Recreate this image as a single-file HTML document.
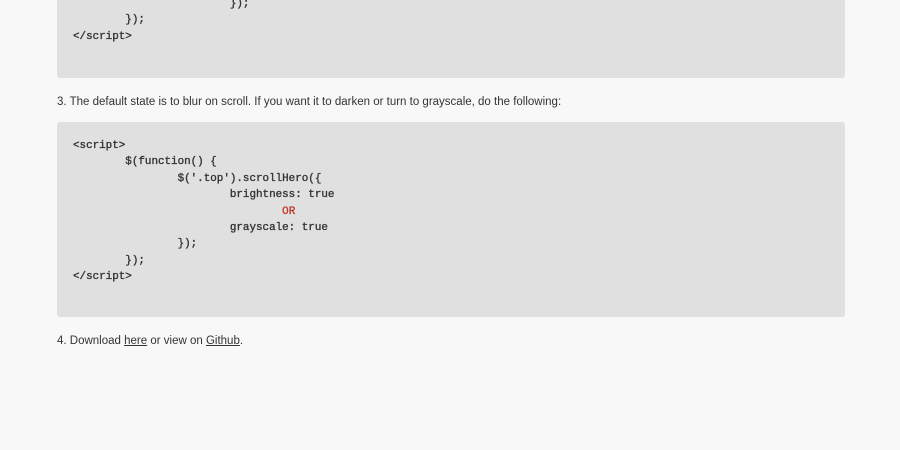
<!DOCTYPE html>
<html><head><style>
body{margin:0;width:900px;height:450px;background:#f8f8f8;position:relative;overflow:hidden;font-family:"Liberation Sans",sans-serif;color:#333;}
.code{position:absolute;left:57px;width:788px;background:#e0e0e0;border-radius:3px;}
pre{margin:0;position:absolute;left:16px;font-family:"Liberation Mono",monospace;font-size:10.9px;line-height:16.4px;tab-size:8;-moz-tab-size:8;color:#333;-webkit-text-stroke:0.35px #333;}
p{position:absolute;left:57px;margin:0;font-size:11.5px;line-height:14px;}
a{color:#333;text-decoration:underline;}
.or{color:#c0392b;-webkit-text-stroke:0.35px #c0392b;}
</style></head><body>
<div class="code" style="top:-10px;height:88px;">
<pre style="top:6px;">			});
	});
&lt;/script&gt;</pre>
</div>
<p style="top:95px;">3. The default state is to blur on scroll. If you want it to darken or turn to grayscale, do the following:</p>
<div class="code" style="top:122px;height:195px;">
<pre style="top:16px;">&lt;script&gt;
	$(function() {
		$('.top').scrollHero({
			brightness: true
			        <span class="or">OR</span>
			grayscale: true
		});
	});
&lt;/script&gt;</pre>
</div>
<p style="top:334px;">4. Download <a>here</a> or view on <a>Github</a>.</p>
</body></html>
